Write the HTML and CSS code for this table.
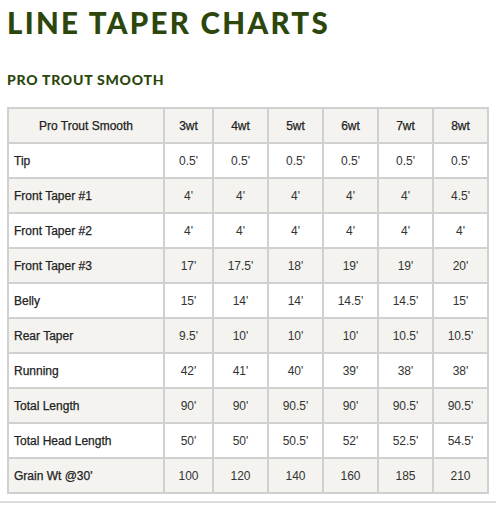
FILE: index.html
```html
<!DOCTYPE html>
<html>
<head>
<meta charset="utf-8">
<link rel="stylesheet" href="styles.css">
</head>
<body>
<div class="page">
  <h1 class="title">LINE TAPER CHARTS</h1>
  <h2 class="subtitle">PRO TROUT SMOOTH</h2>
  <table class="chart">
    <colgroup>
      <col class="c-label"><col class="c-3"><col class="c-w"><col class="c-w"><col class="c-w"><col class="c-w"><col class="c-w">
    </colgroup>
    <thead>
      <tr class="alt"><th>Pro Trout Smooth</th><th>3wt</th><th>4wt</th><th>5wt</th><th>6wt</th><th>7wt</th><th>8wt</th></tr>
    </thead>
    <tbody>
      <tr><td class="lbl">Tip</td><td>0.5'</td><td>0.5'</td><td>0.5'</td><td>0.5'</td><td>0.5'</td><td>0.5'</td></tr>
      <tr class="alt"><td class="lbl">Front Taper #1</td><td>4'</td><td>4'</td><td>4'</td><td>4'</td><td>4'</td><td>4.5'</td></tr>
      <tr><td class="lbl">Front Taper #2</td><td>4'</td><td>4'</td><td>4'</td><td>4'</td><td>4'</td><td>4'</td></tr>
      <tr class="alt"><td class="lbl">Front Taper #3</td><td>17'</td><td>17.5'</td><td>18'</td><td>19'</td><td>19'</td><td>20'</td></tr>
      <tr><td class="lbl">Belly</td><td>15'</td><td>14'</td><td>14'</td><td>14.5'</td><td>14.5'</td><td>15'</td></tr>
      <tr class="alt"><td class="lbl">Rear Taper</td><td>9.5'</td><td>10'</td><td>10'</td><td>10'</td><td>10.5'</td><td>10.5'</td></tr>
      <tr><td class="lbl">Running</td><td>42'</td><td>41'</td><td>40'</td><td>39'</td><td>38'</td><td>38'</td></tr>
      <tr class="alt"><td class="lbl">Total Length</td><td>90'</td><td>90'</td><td>90.5'</td><td>90'</td><td>90.5'</td><td>90.5'</td></tr>
      <tr><td class="lbl">Total Head Length</td><td>50'</td><td>50'</td><td>50.5'</td><td>52'</td><td>52.5'</td><td>54.5'</td></tr>
      <tr class="alt"><td class="lbl">Grain Wt @30'</td><td>100</td><td>120</td><td>140</td><td>160</td><td>185</td><td>210</td></tr>
    </tbody>
  </table>
</div>
<hr class="rule">
</body>
</html>
```
FILE: styles.css
```css
html, body {
  margin: 0;
  padding: 0;
  background: #ffffff;
}
.page {
  padding: 0 7px;
}
.title {
  margin: 0;
  padding-top: 6px;
  font-family: Lato, "Open Sans", sans-serif;
  font-weight: 900;
  font-size: 29.5px;
  line-height: 34px;
  letter-spacing: 2.3px;
  color: #2c460c;
}
.subtitle {
  margin: 31px 0 0;
  font-family: Lato, "Open Sans", sans-serif;
  font-weight: 900;
  font-size: 14px;
  line-height: 17px;
  letter-spacing: 0.75px;
  color: #2c460c;
}
.chart {
  margin-top: 19px;
  width: 480px;
  table-layout: fixed;
  border-collapse: collapse;
  font-family: "Liberation Sans", Arial, sans-serif;
  font-size: 12px;
  color: #333;
}
.c-label { width: 156px; }
.c-3 { width: 49px; }
.c-w { width: 55px; }
.chart th, .chart td {
  border: 2px solid #d0d0d0;
  height: 35px;
  padding: 0 5px;
  text-align: center;
  vertical-align: middle;
  font-weight: 400;
  box-sizing: border-box;
}
.chart th {
  color: #222;
  -webkit-text-stroke: 0.25px #222;
}
.chart td.lbl {
  text-align: left;
  color: #222;
  -webkit-text-stroke: 0.25px #222;
}
.chart tr.alt {
  background: #f4f3ef;
}
.rule {
  margin: 7px 0 0;
  border: 0;
  border-top: 2px solid #dcdcdc;
  height: 0;
}
```
